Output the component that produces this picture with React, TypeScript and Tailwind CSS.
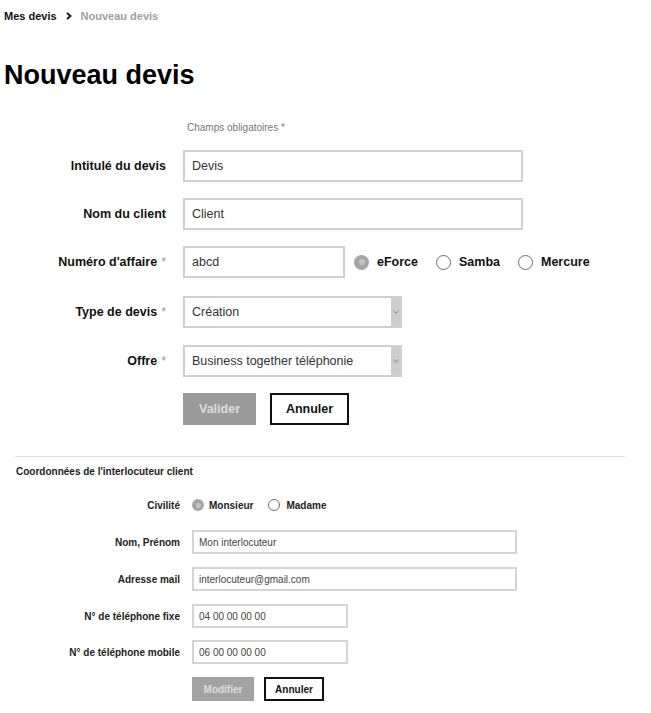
import React from "react";

const Radio = ({ checked, small }: { checked?: boolean; small?: boolean }) => {
  const size = small ? "w-[12px] h-[12px]" : "w-[15px] h-[15px]";
  if (checked) {
    return (
      <span className={`${size} rounded-full bg-[#a6a6a6] flex items-center justify-center shrink-0`}>
        <span className={`${small ? "w-[5px] h-[5px]" : "w-[6px] h-[6px]"} block rounded-full bg-[#c4c4c4]`} />
      </span>
    );
  }
  return <span className={`${size} block rounded-full border-[1.5px] border-[#6b6b6b] bg-white shrink-0`} />;
};

const Chevron = () => (
  <svg width="6" height="4" viewBox="0 0 6 4" fill="none">
    <path d="M0.5 0.8 L3 3.2 L5.5 0.8" stroke="#777" strokeWidth="0.9" />
  </svg>
);

const Row = ({ label, required, mt, children }: { label: string; required?: boolean; mt: string; children: React.ReactNode }) => (
  <div className={`flex items-center h-8 ${mt}`}>
    <label className="w-[166px] text-right text-[12.5px] font-bold text-[#111] whitespace-nowrap">
      {label}
      {required && <span className="font-normal text-[#999] ml-[4px]">*</span>}
    </label>
    <div className="ml-[17px] flex items-center h-full">{children}</div>
  </div>
);

const Field = ({ value, width }: { value: string; width: string }) => (
  <input
    readOnly
    value={value}
    className={`${width} h-8 border-2 border-[#d0d0d0] bg-white pl-[7px] text-[12.5px] text-[#333] outline-none`}
  />
);

const Select = ({ value }: { value: string }) => (
  <div className="w-[219px] h-8 border-2 border-[#d0d0d0] bg-white flex items-stretch">
    <span className="flex-1 flex items-center pl-[7px] text-[12.5px] text-[#333]">{value}</span>
    <span className="w-[9px] bg-[#cdcdcd] flex items-center justify-center">
      <Chevron />
    </span>
  </div>
);

const SmallRow = ({ label, mt, children }: { label: string; mt: string; children: React.ReactNode }) => (
  <div className={`flex items-center ${mt}`}>
    <label className="w-[164px] text-right text-[10px] font-bold text-[#222] whitespace-nowrap">{label}</label>
    <div className="ml-[12px] flex items-center">{children}</div>
  </div>
);

const SmallField = ({ value, width }: { value: string; width: string }) => (
  <input
    readOnly
    value={value}
    className={`${width} h-6 border-2 border-[#d4d4d4] bg-white pl-[5px] text-[10px] text-[#444] outline-none`}
  />
);

export default function App() {
  return (
    <div className="min-h-screen bg-white font-['Liberation_Sans',Arial,sans-serif] text-black">
      <div className="pt-[9px] pl-[4px] flex items-center gap-[9px] text-[11px] leading-[14px] font-bold">
        <span className="text-[#111]">Mes devis</span>
        <svg width="6" height="8" viewBox="0 0 6 8" fill="none">
          <path d="M1 1 L4.5 4 L1 7" stroke="#111" strokeWidth="1.8" />
        </svg>
        <span className="text-[#a0a0a0]">Nouveau devis</span>
      </div>

      <h1 className="mt-[36px] pl-[4px] text-[27px] leading-[32px] font-bold">Nouveau devis</h1>

      <p className="mt-[31px] ml-[187px] text-[10px] leading-[12px] text-[#777]">Champs obligatoires *</p>

      <Row label="Intitulé du devis" mt="mt-4">
        <Field value="Devis" width="w-[340px]" />
      </Row>
      <Row label="Nom du client" mt="mt-4">
        <Field value="Client" width="w-[340px]" />
      </Row>
      <Row label="Numéro d'affaire" required mt="mt-4">
        <Field value="abcd" width="w-[162px]" />
        <div className="ml-[9px] flex items-center text-[12.5px] font-bold text-[#111]">
          <Radio checked />
          <span className="ml-[8px]">eForce</span>
          <span className="ml-[18px]"><Radio /></span>
          <span className="ml-[8px]">Samba</span>
          <span className="ml-[18px]"><Radio /></span>
          <span className="ml-[8px]">Mercure</span>
        </div>
      </Row>
      <Row label="Type de devis" required mt="mt-[18px]">
        <Select value="Création" />
      </Row>
      <Row label="Offre" required mt="mt-[17px]">
        <Select value="Business together téléphonie" />
      </Row>
      <div className="mt-4 ml-[183px] flex gap-[14px]">
        <button className="w-[73px] h-8 bg-[#9b9b9b] text-[#dcdcdc] text-[12.5px] font-bold">Valider</button>
        <button className="w-[79px] h-8 border-2 border-[#111] bg-white text-[#111] text-[12.5px] font-bold">Annuler</button>
      </div>

      <div className="pl-[15px] mt-[31px]">
        <div className="w-[610px] h-px bg-[#dcdcdc]" />
        <p className="mt-[9px] pl-px text-[10px] leading-[12px] font-bold text-[#222]">Coordonnées de l'interlocuteur client</p>

        <div className="flex items-center h-4 mt-[19px]">
          <label className="w-[165px] text-right text-[10px] font-bold text-[#222]">Civilité</label>
          <div className="ml-[12px] flex items-center text-[10px] font-bold text-[#222]">
            <Radio checked small />
            <span className="ml-[5px]">Monsieur</span>
            <span className="ml-[15px]"><Radio small /></span>
            <span className="ml-[6px]">Madame</span>
          </div>
        </div>

        <div className="pl-px">
          <SmallRow label="Nom, Prénom" mt="mt-[17px]">
            <SmallField value="Mon interlocuteur" width="w-[325px]" />
          </SmallRow>
          <SmallRow label="Adresse mail" mt="mt-[13px]">
            <SmallField value="interlocuteur@gmail.com" width="w-[325px]" />
          </SmallRow>
          <SmallRow label="N° de téléphone fixe" mt="mt-[13px]">
            <SmallField value="04 00 00 00 00" width="w-[156px]" />
          </SmallRow>
          <SmallRow label="N° de téléphone mobile" mt="mt-[12px]">
            <SmallField value="06 00 00 00 00" width="w-[156px]" />
          </SmallRow>
          <div className="mt-[13px] ml-[176px] flex gap-[10px]">
            <button className="w-[62px] h-6 bg-[#a3a3a3] text-[#dedede] text-[10px] font-bold">Modifier</button>
            <button className="w-[60px] h-6 border-2 border-[#111] bg-white text-[#111] text-[10px] font-bold">Annuler</button>
          </div>
        </div>
      </div>
    </div>
  );
}
